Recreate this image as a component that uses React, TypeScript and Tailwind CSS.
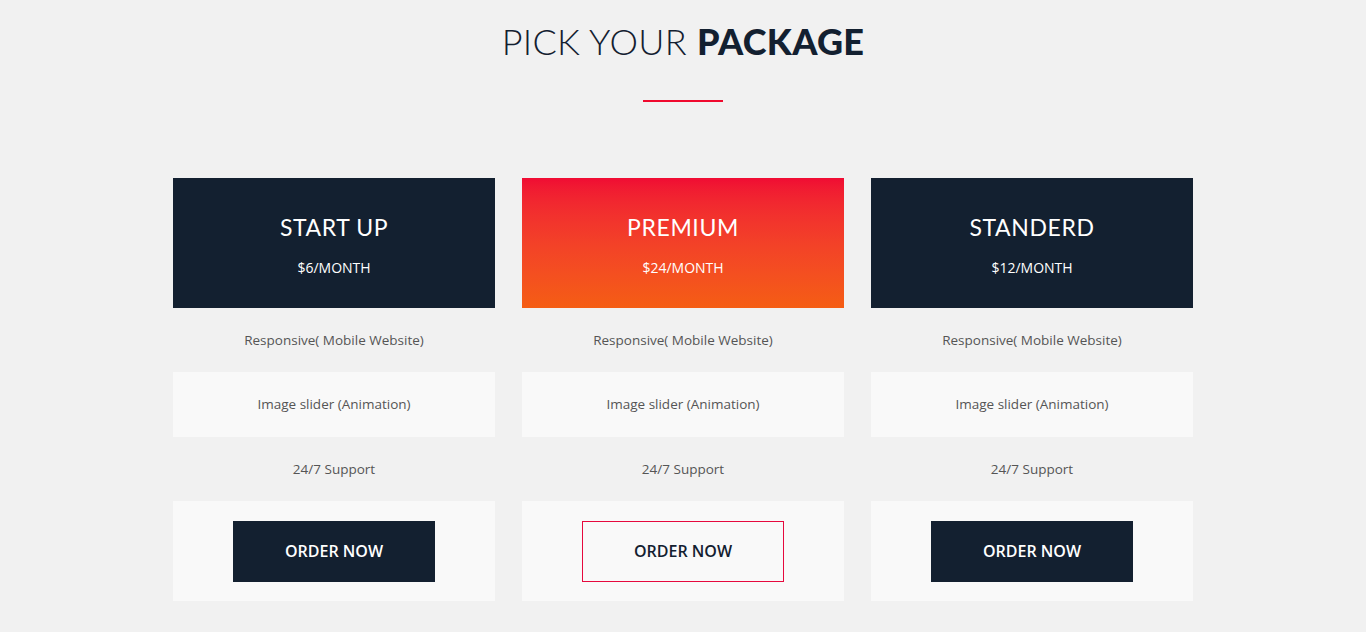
const plans = [
  { name: "START UP", price: "$6/MONTH", featured: false },
  { name: "PREMIUM", price: "$24/MONTH", featured: true },
  { name: "STANDERD", price: "$12/MONTH", featured: false },
];

const features = ["Responsive( Mobile Website)", "Image slider (Animation)", "24/7 Support"];

function PlanCard({ plan }: { plan: (typeof plans)[number] }) {
  return (
    <div className="w-[322px]">
      <div
        className={
          plan.featured
            ? "h-[130px] flex flex-col items-center text-white bg-gradient-to-b from-[#f00b33] to-[#f55d13]"
            : "h-[130px] flex flex-col items-center text-white bg-[#132030]"
        }
      >
        <h3 className="mt-[35px] text-[23px] leading-[28px] tracking-[0.6px] font-['Lato',sans-serif] font-normal">
          {plan.name}
        </h3>
        <p className="mt-[17px] text-[14px] leading-[20px] font-['Open_Sans',sans-serif]">{plan.price}</p>
      </div>
      {features.map((f, i) => (
        <div
          key={f}
          className={
            i % 2 === 1
              ? "h-[65px] flex items-center justify-center bg-[#f9f9f9] text-[13.5px] text-[#555] font-['Open_Sans',sans-serif]"
              : "h-[64px] pt-[1px] flex items-center justify-center text-[13.5px] text-[#555] font-['Open_Sans',sans-serif]"
          }
        >
          {f}
        </div>
      ))}
      <div className="h-[100px] bg-[#f9f9f9] flex justify-center pt-[20px]">
        <button
          className={
            plan.featured
              ? "w-[202px] h-[61px] pb-[1px] border border-[#e6093d] bg-transparent text-[#132030] text-[16px] font-semibold font-['Open_Sans',sans-serif]"
              : "w-[202px] h-[61px] pb-[1px] bg-[#132030] text-white text-[16px] font-semibold font-['Open_Sans',sans-serif]"
          }
        >
          ORDER NOW
        </button>
      </div>
    </div>
  );
}

export default function App() {
  return (
    <div className="min-h-[632px] bg-[#f1f1f1] flex flex-col items-center">
      <h1 className="mt-[19px] text-[36px] leading-[44px] text-[#132030] font-['Lato',sans-serif] tracking-[0.3px]">
        <span className="font-light">PICK YOUR </span>
        <span className="font-black">PACKAGE</span>
      </h1>
      <div className="mt-[37px] w-[80px] h-[2px] bg-[#f00a2e]" />
      <div className="mt-[76px] flex gap-[27px]">
        {plans.map((p) => (
          <PlanCard key={p.name} plan={p} />
        ))}
      </div>
    </div>
  );
}
